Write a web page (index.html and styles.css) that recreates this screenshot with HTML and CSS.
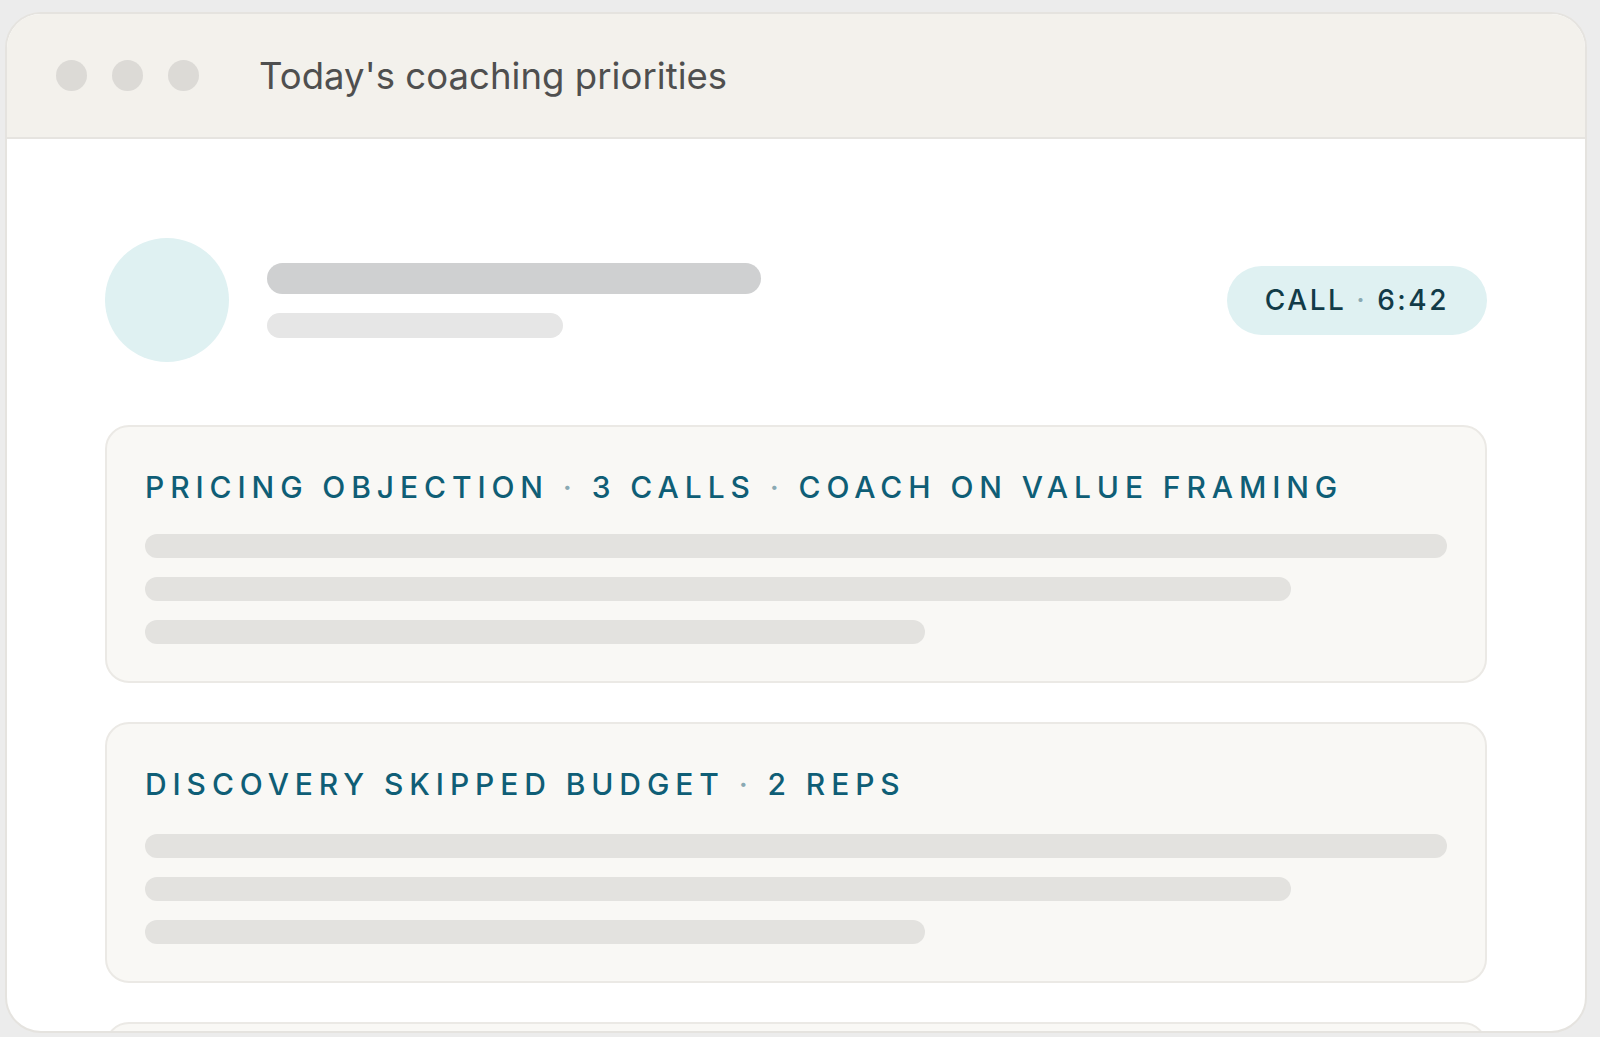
FILE: index.html
```html
<!DOCTYPE html>
<html lang="en">
<head>
    <meta charset="UTF-8">
    <title>Today's coaching priorities</title>
    <link rel="stylesheet" href="styles.css">
</head>
<body>
    <div class="window">
        <div class="titlebar">
            <div class="dots">
                <span class="dot"></span>
                <span class="dot"></span>
                <span class="dot"></span>
            </div>
            <h1 class="title">Today's coaching priorities</h1>
        </div>

        <div class="content">
            <div class="rep-row">
                <div class="avatar"></div>
                <div class="rep-lines">
                    <div class="bar bar-name"></div>
                    <div class="bar bar-sub"></div>
                </div>
                <div class="pill">CALL <span class="sep">·</span> 6:42</div>
            </div>

            <div class="card">
                <p class="card-label">PRICING OBJECTION <span class="sep">·</span> 3 CALLS <span class="sep">·</span> COACH ON VALUE FRAMING</p>
                <div class="line line-full"></div>
                <div class="line line-mid"></div>
                <div class="line line-short"></div>
            </div>

            <div class="card card-tall">
                <p class="card-label">DISCOVERY SKIPPED BUDGET <span class="sep">·</span> 2 REPS</p>
                <div class="line line-full"></div>
                <div class="line line-mid"></div>
                <div class="line line-short"></div>
            </div>

            <div class="card">
                <p class="card-label">&nbsp;</p>
                <div class="line line-full"></div>
            </div>
        </div>
    </div>
</body>
</html>
```

FILE: styles.css
```css
body {
    margin: 0;
    padding: 12px 0 0 5px;
    background-color: #ececec;
    font-family: 'Inter', 'Noto Sans', sans-serif;
}

.window {
    width: 1582px;
    height: 1021px;
    box-sizing: border-box;
    background-color: #fff;
    border: 2px solid #e5e3df;
    border-radius: 36px;
    overflow: hidden;
}

.titlebar {
    height: 123px;
    display: flex;
    align-items: center;
    padding-left: 49px;
    background-color: #f3f1ec;
    border-bottom: 2px solid #e6e4e0;
}

.dots {
    display: flex;
    gap: 25px;
}

.dot {
    width: 31px;
    height: 31px;
    border-radius: 50%;
    background-color: #dcdad6;
}

.title {
    margin: 0 0 0 60px;
    font-size: 36.5px;
    font-weight: 400;
    letter-spacing: 0.05px;
    color: #4f4f4f;
}

.content {
    padding: 99px 98px 0 98px;
}

.rep-row {
    display: flex;
    align-items: center;
    margin-bottom: 63px;
}

.avatar {
    width: 124px;
    height: 124px;
    border-radius: 50%;
    background-color: #dff1f2;
    flex-shrink: 0;
}

.rep-lines {
    margin-left: 38px;
    flex: 1;
    display: flex;
    flex-direction: column;
    gap: 19px;
}

.bar {
    border-radius: 20px;
}

.bar-name {
    width: 494px;
    height: 31px;
    background-color: #cfd0d1;
}

.bar-sub {
    width: 296px;
    height: 25px;
    background-color: #e6e6e6;
}

.pill {
    height: 69px;
    box-sizing: border-box;
    padding: 0 38px 0 38px;
    display: flex;
    align-items: center;
    white-space: pre;
    border-radius: 35px;
    background-color: #dff1f2;
    color: #123b48;
    font-size: 28px;
    font-weight: 500;
    letter-spacing: 2.5px;
}

.sep {
    color: #8aa9b3;
}

.card {
    background-color: #f9f8f5;
    border: 2px solid #ebe9e5;
    border-radius: 24px;
    padding: 42px 38px 37px 38px;
    margin-bottom: 39px;
    display: flex;
    flex-direction: column;
    gap: 19px;
}

.card-tall .card-label {
    margin-bottom: 13px;
}

.card-label {
    margin: 0 0 10px 0;
    font-size: 30px;
    font-weight: 500;
    letter-spacing: 5.9px;
    color: #0f5e76;
    white-space: nowrap;
}

.line {
    height: 24px;
    border-radius: 12px;
    background-color: #e3e2df;
}

.line-full {
    width: 100%;
}

.line-mid {
    width: 1146px;
}

.line-short {
    width: 780px;
}
```
